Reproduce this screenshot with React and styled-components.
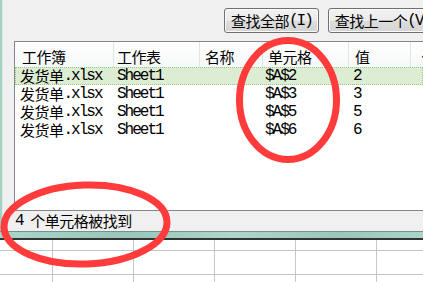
import React from 'react';
import styled, { createGlobalStyle } from 'styled-components';

const teal = '#a3d2c5';
const red = '#ff3b3b';
const gridLine = '#c6c6c6';

const GlobalStyle = createGlobalStyle`
  html, body {
    margin: 0;
    padding: 0;
    background: #fff;
  }
  body {
    width: 423px;
    height: 282px;
    overflow: hidden;
    font-family: "Liberation Mono", "Noto Sans CJK SC", monospace;
    font-size: 15px;
    color: #000;
  }
`;

const Page = styled.div`
  position: relative;
  width: 423px;
  height: 282px;
  overflow: hidden;
  background: #fff;
`;

const Window = styled.div`
  display: flex;
  flex-direction: column;
  background: #f0f0f0;
  border-left: 2px solid ${teal};
  box-shadow: inset 1px 0 0 #dcebe7;
`;

const Toolbar = styled.div`
  display: flex;
  align-items: flex-start;
  gap: 9px;
  height: 41px;
  box-sizing: border-box;
  padding: 8px 0 0 222px;
  white-space: nowrap;
  overflow: hidden;
`;

const Button = styled.div`
  flex: none;
  display: flex;
  align-items: center;
  height: 25px;
  box-sizing: border-box;
  padding: 0 6px;
  border: 1px solid #707070;
  border-radius: 3px;
  background: linear-gradient(#f2f2f2 0%, #ebebeb 50%, #dddddd 51%, #d4d4d4 100%);
  box-shadow: inset 0 0 0 1px #fafafa;
`;

const ListBox = styled.div`
  height: 170px;
  margin-left: 12px;
  box-sizing: border-box;
  border: 1px solid #828790;
  border-right: none;
  background: #fff;
  overflow: hidden;
`;

const HeaderRow = styled.div`
  display: flex;
  height: 25px;
  background: linear-gradient(#ffffff, #f7f8f9);
`;

const HeadCell = styled.div`
  flex: none;
  width: ${({ $w }) => $w}px;
  box-sizing: border-box;
  padding: 4px 0 0 ${({ $pad }) => $pad}px;
  display: flex;
  align-items: center;
  border-right: 1px solid #e3e4e6;
  white-space: nowrap;
  overflow: hidden;
`;

const Row = styled.div`
  display: flex;
  height: 18px;
  background: ${({ $selected }) => ($selected ? '#dcedd3' : 'transparent')};
  outline: ${({ $selected }) => ($selected ? '1px dotted #93cc83' : 'none')};
  outline-offset: -1px;
`;

const Cell = styled.div`
  flex: none;
  display: flex;
  align-items: center;
  width: ${({ $w }) => $w}px;
  height: 18px;
  box-sizing: border-box;
  padding-left: ${({ $pad }) => $pad}px;
  white-space: pre;
  overflow: hidden;
`;

const StatusBar = styled.div`
  display: flex;
  align-items: center;
  height: 20px;
  padding-left: 13px;
  white-space: pre;
`;

const BottomEdge = styled.div`
  height: 6px;
  border-top: 1px solid #7c8e8a;
  border-bottom: 2px solid #333;
  background: linear-gradient(90deg, #a9d6ca, #98c6ba 30%, #acd7cb 55%, #9ac7bb 80%, #a9d6ca);
`;

const Sheet = styled.div`
  display: grid;
  grid-template-columns: 53px repeat(5, 81px);
  grid-template-rows: 11px 24px 24px;
`;

const SheetCell = styled.div`
  box-sizing: border-box;
  border-right: 1px solid ${gridLine};
  border-bottom: 1px solid ${gridLine};
`;

const Overlay = styled.svg`
  position: absolute;
  top: 0;
  left: 0;
  pointer-events: none;
`;

const Han = styled.span`
  font-family: "Noto Sans CJK SC", sans-serif;
  font-size: 15px;
  line-height: 18px;
  letter-spacing: -0.5px;
`;

const Lat = styled.span`
  font-family: "Liberation Mono", monospace;
  font-size: 16px;
  line-height: 18px;
  letter-spacing: -2px;
`;

const hanRun = /([\u3000-\u9fff\uff00-\uffef]+)/;

// SimSun-like mix: full-width han, half-width latin
const Txt = ({ children }) =>
  String(children)
    .split(hanRun)
    .filter(Boolean)
    .map((part, i) =>
      hanRun.test(part) ? <Han key={i}>{part}</Han> : <Lat key={i}>{part}</Lat>
    );

const columns = [
  { title: '工作簿', w: 99, head: 7, pad: 5 },
  { title: '工作表', w: 86, head: 3, pad: 3 },
  { title: '名称', w: 63, head: 5, pad: 3 },
  { title: '单元格', w: 86, head: 5, pad: 2 },
  { title: '值', w: 62, head: 6, pad: 4 },
  { title: '公式', w: 120, head: 10, pad: 4 },
];

const results = [
  ['发货单.xlsx', 'Sheet1', '', '$A$2', '2', ''],
  ['发货单.xlsx', 'Sheet1', '', '$A$3', '3', ''],
  ['发货单.xlsx', 'Sheet1', '', '$A$5', '5', ''],
  ['发货单.xlsx', 'Sheet1', '', '$A$6', '6', ''],
];

export default function App() {
  return (
    <Page>
      <GlobalStyle />
      <Window>
        <Toolbar>
          <Button><Txt>查找全部(I)</Txt></Button>
          <Button><Txt>查找上一个(V)</Txt></Button>
        </Toolbar>
        <ListBox>
          <HeaderRow>
            {columns.map((c) => (
              <HeadCell key={c.title} $w={c.w} $pad={c.head}>
                <Txt>{c.title}</Txt>
              </HeadCell>
            ))}
          </HeaderRow>
          {results.map((r, i) => (
            <Row key={i} $selected={i === 0}>
              {r.map((v, j) => (
                <Cell key={j} $w={columns[j].w} $pad={columns[j].pad}>
                  <Txt>{v}</Txt>
                </Cell>
              ))}
            </Row>
          ))}
        </ListBox>
        <StatusBar>
          <Txt>4 个单元格被找到</Txt>
        </StatusBar>
      </Window>
      <BottomEdge />
      <Sheet>
        {Array.from({ length: 18 }, (_, i) => (
          <SheetCell key={i} />
        ))}
      </Sheet>
      <Overlay width="423" height="282" viewBox="0 0 423 282">
        <ellipse cx="288" cy="100" rx="48.5" ry="59.5" fill="none" stroke={red} strokeWidth="7" />
        <ellipse
          cx="85.5"
          cy="224.5"
          rx="81.5"
          ry="39.5"
          fill="none"
          stroke={red}
          strokeWidth="7"
          transform="rotate(-2 85.5 224.5)"
        />
      </Overlay>
    </Page>
  );
}
